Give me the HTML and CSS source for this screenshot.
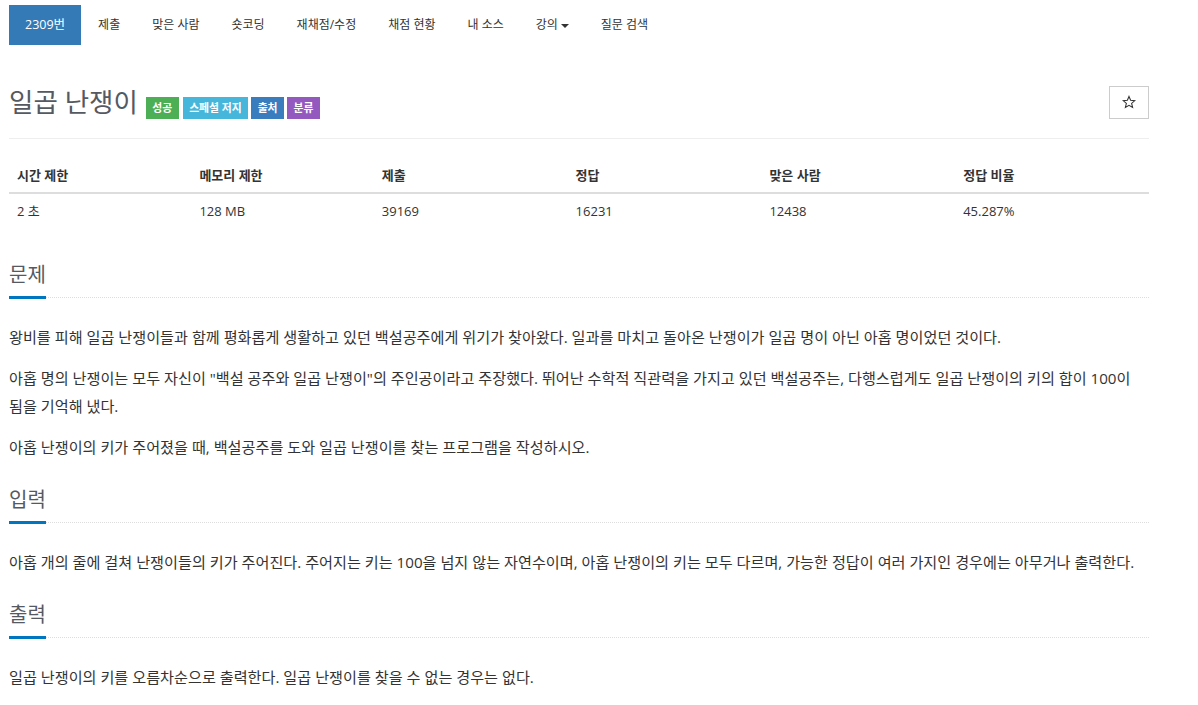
FILE: index.html
```html
<!DOCTYPE html>
<html lang="ko">
<head>
<meta charset="utf-8">
<title>일곱 난쟁이</title>
<link rel="stylesheet" href="styles.css">
</head>
<body>
<div class="wrap">
  <ul class="nav">
    <li class="active"><a>2309번</a></li>
    <li><a>제출</a></li>
    <li><a>맞은 사람</a></li>
    <li><a>숏코딩</a></li>
    <li><a>재채점/수정</a></li>
    <li><a>채점 현황</a></li>
    <li><a>내 소스</a></li>
    <li><a>강의<span class="caret"></span></a></li>
    <li><a>질문 검색</a></li>
  </ul>

  <div class="page-header">
    <div class="title-line">
      <h1>일곱 난쟁이</h1>
      <span class="label green">성공</span>
      <span class="label cyan">스페셜 저지</span>
      <span class="label blue">출처</span>
      <span class="label purple">분류</span>
    </div>
    <button class="star-btn" type="button"><svg width="14" height="14" viewBox="0 0 24 24"><path d="M12 2.5l2.8 6.6 7.2.6-5.5 4.7 1.7 7-6.2-3.8-6.2 3.8 1.7-7L2 9.7l7.2-.6z" fill="none" stroke="#333" stroke-width="1.8" stroke-linejoin="miter"/></svg></button>
  </div>

  <table class="info">
    <thead>
      <tr><th class="c1">시간 제한</th><th class="c1">메모리 제한</th><th class="c2">제출</th><th class="c2">정답</th><th class="c2">맞은 사람</th><th class="c2">정답 비율</th></tr>
    </thead>
    <tbody>
      <tr><td>2 초</td><td>128 MB</td><td>39169</td><td>16231</td><td>12438</td><td>45.287%</td></tr>
    </tbody>
  </table>

  <section class="section">
    <div class="headline"><h2>문제</h2></div>
    <div class="body">
      <p>왕비를 피해 일곱 난쟁이들과 함께 평화롭게 생활하고 있던 백설공주에게 위기가 찾아왔다. 일과를 마치고 돌아온 난쟁이가 일곱 명이 아닌 아홉 명이었던 것이다.</p>
      <p>아홉 명의 난쟁이는 모두 자신이 "백설 공주와 일곱 난쟁이"의 주인공이라고 주장했다. 뛰어난 수학적 직관력을 가지고 있던 백설공주는, 다행스럽게도 일곱 난쟁이의 키의 합이 100이 됨을 기억해 냈다.</p>
      <p>아홉 난쟁이의 키가 주어졌을 때, 백설공주를 도와 일곱 난쟁이를 찾는 프로그램을 작성하시오.</p>
    </div>
  </section>

  <section class="section">
    <div class="headline"><h2>입력</h2></div>
    <div class="body">
      <p>아홉 개의 줄에 걸쳐 난쟁이들의 키가 주어진다. 주어지는 키는 100을 넘지 않는 자연수이며, 아홉 난쟁이의 키는 모두 다르며, 가능한 정답이 여러 가지인 경우에는 아무거나 출력한다.</p>
    </div>
  </section>

  <section class="section">
    <div class="headline"><h2>출력</h2></div>
    <div class="body">
      <p>일곱 난쟁이의 키를 오름차순으로 출력한다. 일곱 난쟁이를 찾을 수 없는 경우는 없다.</p>
    </div>
  </section>
</div>
</body>
</html>
```

FILE: styles.css
```css
* { box-sizing: border-box; }
html, body { margin: 0; padding: 0; background: #fff; }
body {
  font-family: "Open Sans", "Noto Sans CJK KR", sans-serif;
  font-size: 14px;
  color: #333;
}
.wrap {
  width: 1140px;
  margin-left: 9px;
}

/* nav */
.nav {
  list-style: none;
  margin: 5px 0 0 0;
  padding: 0;
  display: flex;
}
.nav li + li { margin-left: 2px; }
.nav a {
  display: block;
  padding: 10px 15px;
  line-height: 20px;
  font-size: 12px;
  color: #333;
}
.nav .active a {
  background: #337ab7;
  color: #fff;
  font-size: 12.5px;
  padding: 10px 16px;
}
.caret {
  display: inline-block;
  width: 0;
  height: 0;
  margin-left: 3px;
  vertical-align: middle;
  border-top: 4px solid #333;
  border-left: 4px solid transparent;
  border-right: 4px solid transparent;
}

/* header */
.page-header {
  margin-top: 40px;
  padding-bottom: 19px;
  border-bottom: 1px solid #eee;
  display: flex;
  justify-content: space-between;
  align-items: center;
}
.title-line {
  display: flex;
  align-items: flex-end;
}
h1 {
  margin: 0;
  font-size: 26.5px;
  line-height: 34px;
  font-weight: 400;
  color: #555a62;
}
.label {
  display: inline-block;
  height: 22px;
  line-height: 22px;
  padding: 0 6.5px;
  font-size: 10.8px;
  font-weight: 700;
  color: #fff;
  margin-left: 3px;
  margin-bottom: 0;
}
.label.green { background: #4cae55; margin-left: 8px; }
.label.cyan { background: #46b6da; margin-left: 4px; }
.label.blue { background: #3a7dbf; }
.label.purple { background: #9359be; }
.star-btn {
  width: 40px;
  height: 33px;
  border: 1px solid #ccc;
  background: #fff;
  padding: 0;
  display: flex;
  align-items: center;
  justify-content: center;
}

/* table */
.info {
  width: 100%;
  border-collapse: collapse;
  margin-top: 19px;
  font-size: 13px;
}
.info th, .info td {
  text-align: left;
  padding: 8px;
  line-height: 18px;
}
.info th {
  font-weight: 700;
  border-bottom: 2px solid #ddd;
}
.info .c1 { width: 16%; }
.info .c2 { width: 17%; }

/* sections */
.section { margin-top: 15px; display: flow-root; }
.info + .section { margin-top: 36px; }
.headline {
  display: flex;
  border-bottom: 1px dotted #ddd;
}
.headline h2 {
  margin: 0 0 -2px 0;
  padding-bottom: 10px;
  font-size: 20px;
  line-height: 22px;
  font-weight: 400;
  color: #555a62;
  border-bottom: 3px solid #0076c0;
}
.body { padding-top: 25px; display: flow-root; }
.body p {
  margin: 0 0 13px 0;
  line-height: 28px;
  font-size: 15.15px;
  word-break: keep-all;
}
```
